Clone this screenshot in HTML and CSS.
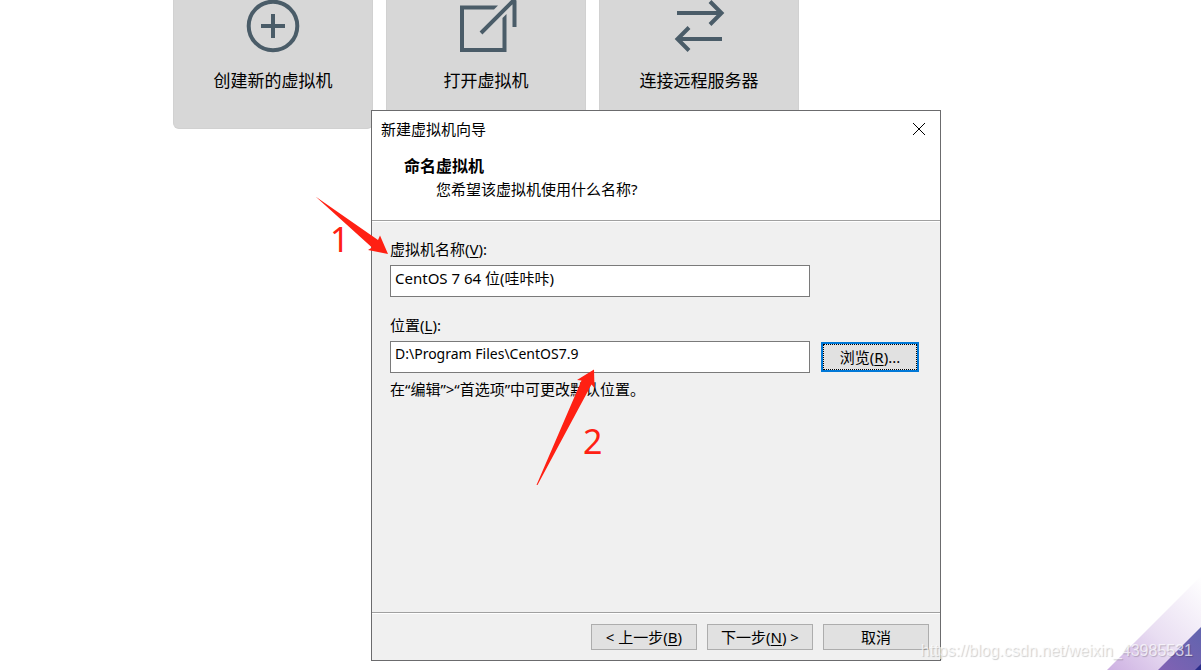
FILE: index.html
```html
<!DOCTYPE html>
<html lang="zh-CN">
<head>
<meta charset="utf-8">
<title>新建虚拟机向导</title>
<link rel="stylesheet" href="styles.css">
</head>
<body>
<main class="home">
  <nav class="cards">
    <button class="card" type="button">
      <svg class="card-icon" viewBox="0 0 52 52" aria-hidden="true"><circle cx="26" cy="26" r="24.3"/><path d="M14 26h24M26 14v24"/></svg>
      <span>创建新的虚拟机</span>
    </button>
    <button class="card" type="button">
      <svg class="card-icon" viewBox="0 0 52 52" aria-hidden="true"><path class="solid" d="M38 5.500H0V52H46.500V14L42.500 18V48H4V9.500H34Z"/><path d="M21 33L56 -2M54.500 0V27"/></svg>
      <span>打开虚拟机</span>
    </button>
    <button class="card" type="button">
      <svg class="card-icon" viewBox="0 0 52 52" aria-hidden="true"><path d="M4 13H49M37 1.500L48.500 13L37 24.500M49 39H4M16 27.500L4.500 39L16 50.500"/></svg>
      <span>连接远程服务器</span>
    </button>
  </nav>
</main>

<svg class="corner" viewBox="0 0 94 94" aria-hidden="true">
  <defs>
    <linearGradient id="pale" x1="0" y1="1" x2="1" y2="0"><stop offset="0" stop-color="#cdb0e2"/><stop offset="0.450" stop-color="#e9def2"/><stop offset="1" stop-color="#fff"/></linearGradient>
    <linearGradient id="deep" x1="0" y1="1" x2="1" y2="0"><stop offset="0" stop-color="#8262b4"/><stop offset="1" stop-color="#6064ae"/></linearGradient>
  </defs>
  <path d="M94 0V94H0Z" fill="url(#pale)"/>
  <path d="M94 51V94H51Z" fill="url(#deep)"/>
  <path d="M94 88V94H88Z" fill="#2a2c8a"/>
</svg>

<section class="wizard" role="dialog" aria-labelledby="wizard-title">
  <header class="wizard-head">
    <div class="titlebar">
      <span id="wizard-title">新建虚拟机向导</span>
      <button class="close" type="button" aria-label="关闭"><svg viewBox="0 0 12 12" aria-hidden="true"><path d="M0 0L12 12M12 0L0 12"/></svg></button>
    </div>
    <h1>命名虚拟机</h1>
    <p>您希望该虚拟机使用什么名称?</p>
  </header>
  <form class="wizard-form">
    <div class="fields">
      <label for="vm-name">虚拟机名称(<u>V</u>):</label>
      <input id="vm-name" type="text" value="CentOS 7 64 位(哇咔咔)">
      <label for="vm-path" class="second">位置(<u>L</u>):</label>
      <input id="vm-path" class="path" type="text" value="D:\Program Files\CentOS7.9">
      <button class="btn browse" type="button"><span>浏览(<u>R</u>)...</span></button>
      <p class="hint">在“编辑”&gt;“首选项”中可更改默认位置。</p>
    </div>
    <footer class="actions">
      <button class="btn" type="button">&lt; 上一步(<u>B</u>)</button>
      <button class="btn" type="button">下一步(<u>N</u>) &gt;</button>
      <button class="btn" type="button">取消</button>
    </footer>
  </form>
</section>

<svg class="arrow arrow-one" viewBox="0 0 74 60" aria-hidden="true"><path d="M0.500 0.500L63 44L65 39.500L73 58L53 54L57 51.500Z"/></svg>
<span class="mark mark-one">1</span>
<svg class="arrow arrow-two" viewBox="0 0 60 118" aria-hidden="true"><path d="M0.500 116L45.500 11.500L41 11L58 0.500L58.500 19L55.500 15.500L1.500 116Z"/></svg>
<span class="mark mark-two">2</span>
<span class="watermark">https://blog.csdn.net/weixin_43985531</span>
</body>
</html>
```
FILE: styles.css
```css
* { box-sizing: border-box; }

body {
  margin: 0;
  min-height: 100vh;
  position: relative;
  overflow: hidden;
  background: #fff;
  color: #000;
  font: 15px/20px "Noto Sans", "Noto Sans CJK SC", sans-serif;
}

button, input { font: inherit; color: inherit; }
h1, p { margin: 0; }
u { text-underline-offset: 2px; text-decoration-thickness: 1px; }

/* Start page cards */
.home { padding-left: 173px; }
.cards { display: flex; gap: 13px; }
.card {
  display: flex;
  flex-direction: column;
  align-items: center;
  gap: 17px;
  width: 200px;
  padding: 0 0 35px;
  border: 1px solid #d1d1d1;
  border-top: 0;
  border-radius: 0 0 6px 6px;
  background: #d7d7d7;
  font-size: 17px;
  line-height: 24px;
}
.card-icon {
  width: 52px;
  height: 52px;
  overflow: visible;
  fill: none;
  stroke: #4a5c68;
  stroke-width: 4;
}
.card-icon .solid { fill: #4a5c68; stroke: none; }

/* Wizard window */
.wizard {
  position: absolute;
  left: 371px;
  top: 110px;
  width: 570px;
  border: 1px solid #6b6b6d;
  background: #f0f0f0;
}
.wizard-head {
  padding-bottom: 21px;
  border-bottom: 1px solid #a0a0a0;
  background: #fff;
}
.titlebar {
  display: flex;
  justify-content: space-between;
  align-items: center;
  height: 36px;
  padding: 0 10px 0 9px;
}
.close {
  display: grid;
  place-items: center;
  width: 22px;
  height: 22px;
  padding: 0;
  border: 0;
  background: none;
}
.close svg { width: 12px; height: 12px; overflow: visible; stroke: #000; fill: none; }
.wizard-head h1 { padding: 8px 0 2px 32px; font-size: 16px; line-height: 22px; }
.wizard-head p { padding-left: 64px; }

.fields {
  display: grid;
  grid-template-columns: 1fr 98px;
  align-content: start;
  align-items: center;
  column-gap: 11px;
  min-height: 391px;
  padding: 17px 21px 0 18px;
  border-top: 1px solid #fff;
}
.fields label { grid-column: 1 / -1; margin-bottom: 6px; }
.fields .second { margin-top: 18px; }
.fields input {
  grid-column: 1;
  width: 100%;
  height: 32px;
  padding: 0 4px 8px;
  border: 1px solid #7a7a7a;
  border-radius: 0;
  background: #fff;
  outline: 0;
}
.fields .path { font-size: 14px; }
.hint { grid-column: 1 / -1; margin-top: 6px; }

.btn {
  padding: 0;
  border: 1px solid #adadad;
  border-radius: 0;
  background: #e1e1e1;
  white-space: pre;
}
.browse { height: 30px; border: 2px solid #0078d7; }
.browse span {
  display: grid;
  grid-auto-flow: column;
  place-content: center;
  height: 26px;
  border: 1px dotted #000;
}
.actions {
  display: flex;
  justify-content: flex-end;
  gap: 10px;
  padding: 11px 11px 10px;
  border-top: 1px solid #a0a0a0;
  box-shadow: inset 0 1px #fff;
}
.actions .btn { width: 106px; height: 26px; }

/* Annotations over the window */
.arrow { position: absolute; fill: #ff2013; }
.arrow-one { left: 315px; top: 196px; width: 74px; }
.arrow-two { left: 536px; top: 369px; width: 60px; }
.mark { position: absolute; color: #ff2013; font-size: 34px; line-height: 40px; }
.mark-one { left: 330px; top: 219px; }
.mark-two { left: 583px; top: 421px; }

.corner { position: absolute; right: 0; bottom: 0; width: 94px; }
.watermark {
  position: absolute;
  right: 8px;
  bottom: 9px;
  color: rgba(255, 255, 255, 0.700);
  font: 16px/20px "Liberation Sans", sans-serif;
  text-shadow: 1px 1px 1px rgba(0, 0, 0, 0.200);
}
```
